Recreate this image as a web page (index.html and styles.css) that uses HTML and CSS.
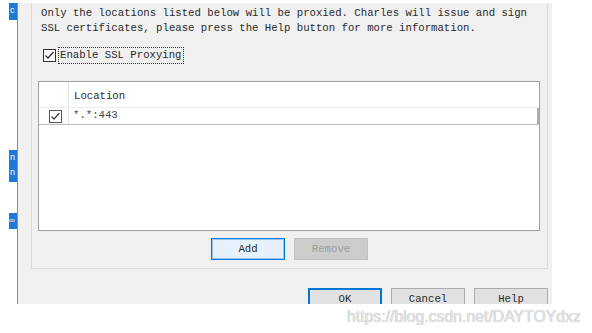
FILE: index.html
```html
<!DOCTYPE html>
<html>
<head>
<meta charset="utf-8">
<link rel="stylesheet" href="styles.css">
</head>
<body>
<div class="screen">
  <div class="side">
    <div class="tab tab1">c</div>
    <div class="tab tab2">n<br>n</div>
    <div class="tab tab3">co</div>
  </div>
  <div class="dialog">
    <div class="panel">
      <p class="intro">Only the locations listed below will be proxied. Charles will issue and sign<br>SSL certificates, please press the Help button for more information.</p>
      <div class="enable">
        <span class="cb"><svg width="11" height="11" viewBox="0 0 11 11"><path d="M1.5 5.5 L4 8 L9.5 2" fill="none" stroke="#333" stroke-width="1.3"/></svg></span>
        <span class="focus">Enable SSL Proxying</span>
      </div>
      <div class="list">
        <div class="thead">
          <div class="c1"></div>
          <div class="c2">Location</div>
        </div>
        <div class="trow">
          <div class="c1"><span class="cb dark"><svg width="11" height="11" viewBox="0 0 11 11"><path d="M1.5 5.5 L4 8 L9.5 2" fill="none" stroke="#444" stroke-width="1.3"/></svg></span></div>
          <div class="c2">*.*:443</div>
          <div class="sb"></div>
        </div>
      </div>
      <div class="btns">
        <button class="btn focused">Add</button>
        <button class="btn disabled">Remove</button>
      </div>
    </div>
    <div class="footer">
      <button class="btn ok">OK</button>
      <button class="btn">Cancel</button>
      <button class="btn">Help</button>
    </div>
  </div>
  <div class="watermark">https://blog.csdn.net/DAYTOYdxz</div>
</div>
</body>
</html>
```
FILE: styles.css
```css
html, body {
  margin: 0;
  padding: 0;
  background: #ffffff;
}
.screen {
  position: relative;
  width: 592px;
  height: 333px;
  display: flex;
  align-items: flex-start;
  overflow: hidden;
  font-family: "Liberation Mono", monospace;
  font-size: 10.67px;
  color: #2a2a2a;
}
.side {
  width: 17px;
  display: flex;
  flex-direction: column;
  flex-shrink: 0;
}
.tab {
  margin-left: 9px;
  width: 8px;
  background: #1f78d6;
  color: #fff;
  font-family: "Liberation Sans", sans-serif;
  font-size: 9px;
  line-height: 15px;
  overflow: hidden;
  padding-left: 1px;
  box-sizing: border-box;
}
.tab1 { margin-top: 3px; height: 17px; }
.tab2 { margin-top: 130px; height: 32px; }
.tab3 { margin-top: 31px; height: 16px; font-size: 6px; padding-left: 0; letter-spacing: -0.5px; }
.dialog {
  margin-top: 3px;
  width: 535px;
  height: 301px;
  box-sizing: border-box;
  border-left: 1px solid #8e8e8e;
  background: #f0f0f0;
  padding-left: 13px;
  overflow: hidden;
  flex-shrink: 0;
}
.panel {
  width: 517px;
  height: 266px;
  box-sizing: border-box;
  border: 1px solid #dadada;
  border-top: none;
  padding: 3px 0 0 6px;
}
.intro {
  margin: 0 0 0 3px;
  line-height: 15px;
  white-space: nowrap;
}
.enable {
  margin: 11px 0 0 5px;
  display: flex;
  align-items: center;
  gap: 2px;
  height: 17px;
}
.cb {
  width: 13px;
  height: 13px;
  box-sizing: border-box;
  border: 1px solid #333;
  background: #fff;
  display: flex;
  align-items: center;
  justify-content: center;
}
.cb.dark { border-color: #555; }
.focus {
  border: 1px dotted #333;
  height: 17px;
  box-sizing: border-box;
  padding: 0 1px;
  line-height: 15px;
}
.list {
  margin-top: 17px;
  width: 502px;
  height: 150px;
  box-sizing: border-box;
  border: 1px solid #a2a2a2;
  background: #fff;
}
.thead {
  display: flex;
  height: 26px;
  border-bottom: 1px solid #eeeeee;
  box-sizing: border-box;
}
.thead .c2 {
  padding: 4px 0 0 5px;
  line-height: 21px;
}
.c1 {
  width: 29px;
  border-right: 1px solid #e2e2e2;
  display: flex;
  align-items: center;
  justify-content: center;
  flex-shrink: 0;
}
.c2 {
  flex: 1;
  padding-left: 5px;
}
.trow {
  display: flex;
  height: 16px;
  border-bottom: 1px solid #bdbdbd;
  line-height: 15px;
}
.trow .c1 { padding-left: 3px; box-sizing: content-box; width: 26px; }
.trow .c2 { padding-left: 4px; color: #444; }
.sb {
  width: 2px;
  background: #b0b0b0;
}
.btns {
  margin-top: 7px;
  width: 502px;
  display: flex;
  justify-content: center;
  gap: 9px;
  padding-left: 1px;
  box-sizing: border-box;
}
.btn {
  width: 74px;
  height: 22px;
  box-sizing: border-box;
  border: 1px solid #adadad;
  background: #e1e1e1;
  font-family: "Liberation Mono", monospace;
  font-size: 10.67px;
  color: #2a2a2a;
  line-height: 20px;
  padding: 0;
  margin: 0;
}
.btn.focused {
  border: 1px solid #0078d7;
  box-shadow: inset 0 0 0 1px rgba(0, 120, 215, 0.35);
  background: #e5f1fb;
}
.btn.disabled {
  background: #cccccc;
  border-color: #c2c2c2;
  color: #9c9c9c;
}
.btn.ok {
  border: 1px solid #0078d7;
  box-shadow: inset 0 0 0 1px #0078d7;
}
.footer {
  margin-top: 19px;
  width: 517px;
  display: flex;
  justify-content: flex-end;
  gap: 9px;
}
.watermark {
  position: absolute;
  left: 347px;
  top: 308px;
  font-family: "Liberation Sans", sans-serif;
  font-size: 15.8px;
  line-height: 18px;
  color: #e4e4e4;
  text-shadow: 0 0 1px #a8a8a8;
  white-space: nowrap;
}
```
